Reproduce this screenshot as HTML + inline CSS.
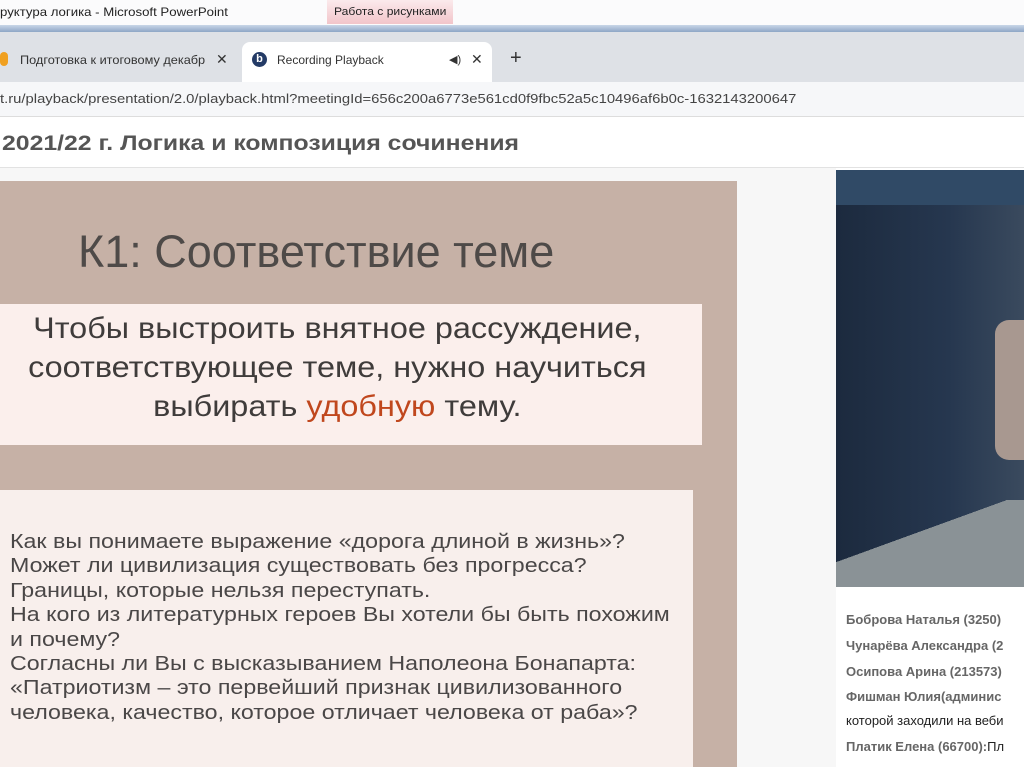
<!DOCTYPE html>
<html><head><meta charset="utf-8"><style>
body{margin:0;width:1024px;height:767px;overflow:hidden;background:#fff;font-family:"Liberation Sans","DejaVu Sans",sans-serif;position:relative}
.a{position:absolute;white-space:nowrap}
.sq{display:inline-block;transform-origin:0 0}
</style></head><body>
<div class="a" style="left:0;top:0;width:1024px;height:27px;background:#fbfbfc"></div>
<div class="a" style="left:0;top:5px;font-size:12px;color:#222"><span class="sq" style="transform:scaleX(1.1)">руктура логика - Microsoft PowerPoint</span></div>
<div class="a" style="left:327px;top:0;width:126px;height:24px;background:linear-gradient(#fbeaec,#f2c5ca)"></div>
<div class="a" style="left:334px;top:6px;font-size:11px;color:#222"><span class="sq" style="transform:scaleX(1.1)">Работа с рисунками</span></div>
<div class="a" style="left:0;top:25px;width:1024px;height:7px;background:linear-gradient(#c9d6e8,#8ea6c6)"></div>
<div class="a" style="left:0;top:32px;width:1024px;height:50px;background:#dee1e6"></div>
<div class="a" style="left:242px;top:42px;width:250px;height:40px;background:#fff;border-radius:8px 8px 0 0"></div>
<div class="a" style="left:0;top:52px;width:8px;height:14px;background:#f0a020;border-radius:4px"></div>
<div class="a" style="left:20px;top:53px;font-size:12px;color:#333"><span class="sq" style="transform:scaleX(1.06)">Подготовка к итоговому декабр</span></div>
<div class="a" style="left:216px;top:51px;font-size:14px;color:#333">✕</div>
<div class="a" style="left:252px;top:52px;width:15px;height:15px;border-radius:50%;background:#243b66;color:#fff;font-size:11px;font-weight:bold;text-align:center;line-height:15px">b</div>
<div class="a" style="left:277px;top:53px;font-size:12px;color:#333"><span class="sq" style="transform:scaleX(1.0)">Recording Playback</span></div>
<div class="a" style="left:449px;top:53px;font-size:11px;color:#333">◀)</div>
<div class="a" style="left:471px;top:51px;font-size:14px;color:#333">✕</div>
<div class="a" style="left:510px;top:47px;font-size:20px;color:#333">+</div>
<div class="a" style="left:0;top:82px;width:1024px;height:34px;background:#f6f7f9"></div>
<div class="a" style="left:0;top:91px;font-size:13px;color:#444"><span class="sq" style="transform:scaleX(1.14)">t.ru/playback/presentation/2.0/playback.html?meetingId=656c200a6773e561cd0f9fbc52a5c10496af6b0c-1632143200647</span></div>
<div class="a" style="left:0;top:116px;width:1024px;height:1px;background:#ddd"></div>
<div class="a" style="left:2px;top:132px;font-size:21px;font-weight:bold;color:#555"><span class="sq" style="transform:scaleX(1.18)">2021/22 г. Логика и композиция сочинения</span></div>
<div class="a" style="left:0;top:167px;width:1024px;height:1px;background:#e2e2e2"></div>
<div class="a" style="left:0;top:168px;width:836px;height:599px;background:#f7f7f7"></div>
<div class="a" style="left:0;top:181px;width:737px;height:586px;background:#c6b1a6"></div>
<div class="a" style="left:78px;top:226px;font-size:45px;color:#4e4a48">К1: Соответствие теме</div>
<div class="a" style="left:0;top:304px;width:702px;height:141px;background:#fbefec"></div>
<div class="a" style="left:0;top:309px;width:674px;text-align:center;font-size:30px;line-height:39px;color:#3f3c3b"><span class="sq" style="transform:scaleX(1.08);transform-origin:50% 0">Чтобы выстроить внятное рассуждение,<br>соответствующее теме, нужно научиться<br>выбирать <span style="color:#c0471d">удобную</span> тему.</span></div>
<div class="a" style="left:0;top:490px;width:693px;height:277px;background:#f8efec"></div>
<div class="a" style="left:10px;top:530px;font-size:20px;line-height:24.4px;color:#4a4747"><span class="sq" style="transform:scaleX(1.16)">Как вы понимаете выражение «дорога длиной в жизнь»?<br>Может ли цивилизация существовать без прогресса?<br>Границы, которые нельзя переступать.<br>На кого из литературных героев Вы хотели бы быть похожим<br>и почему?<br>Согласны ли Вы с высказыванием Наполеона Бонапарта:<br>«Патриотизм –  это первейший признак цивилизованного<br>человека, качество, которое отличает человека от раба»?</span></div>
<div class="a" style="left:836px;top:170px;width:188px;height:417px;background:linear-gradient(90deg,#1c2a3e,#26374f 60%,#3a4a5e);"></div>
<div class="a" style="left:836px;top:170px;width:188px;height:35px;background:#304a66"></div>
<div class="a" style="left:995px;top:320px;width:29px;height:140px;background:#a89890;border-radius:14px 0 0 14px"></div>
<div class="a" style="left:836px;top:500px;width:188px;height:87px;background:linear-gradient(160deg,transparent 40%,#8a9296 40%)"></div>
<div class="a" style="left:836px;top:587px;width:188px;height:180px;background:#fff"></div>
<div class="a" style="left:846px;top:607px;font-size:13px;font-weight:bold;color:#666;line-height:25.8px">Боброва Наталья (3250)<br>Чунарёва Александра (2<br>Осипова Арина (213573)<br>Фишман Юлия(админис</div>
<div class="a" style="left:846px;top:713px;font-size:13px;color:#222">которой заходили на веби</div>
<div class="a" style="left:846px;top:739px;font-size:13px;font-weight:bold;color:#666">Платик Елена (66700):<span style="font-weight:normal;color:#222">Пл</span></div>
</body></html>
